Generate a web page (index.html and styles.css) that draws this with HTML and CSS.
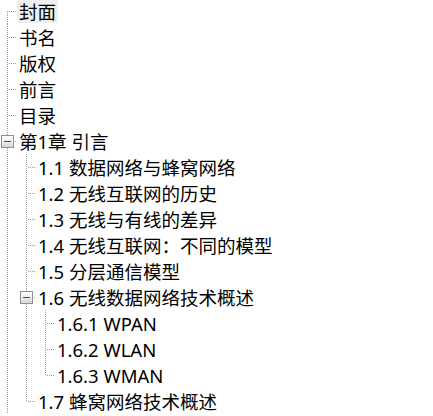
FILE: index.html
```html
<!DOCTYPE html>
<html lang="zh-CN">
<head>
<meta charset="utf-8">
<title>目录树</title>
<link rel="stylesheet" href="styles.css">
</head>
<body>
<ul class="tree root">
  <li class="first"><div class="row"><span class="slot"></span><span class="label selected">封面</span></div></li>
  <li><div class="row"><span class="slot"></span><span class="label">书名</span></div></li>
  <li><div class="row"><span class="slot"></span><span class="label">版权</span></div></li>
  <li><div class="row"><span class="slot"></span><span class="label">前言</span></div></li>
  <li><div class="row"><span class="slot"></span><span class="label">目录</span></div></li>
  <li>
    <div class="row"><span class="slot"><span class="toggle"></span></span><span class="label">第1章 引言</span></div>
    <ul class="tree">
      <li><div class="row"><span class="slot"></span><span class="label">1.1 数据网络与蜂窝网络</span></div></li>
      <li><div class="row"><span class="slot"></span><span class="label">1.2 无线互联网的历史</span></div></li>
      <li><div class="row"><span class="slot"></span><span class="label">1.3 无线与有线的差异</span></div></li>
      <li><div class="row"><span class="slot"></span><span class="label">1.4 无线互联网：不同的模型</span></div></li>
      <li><div class="row"><span class="slot"></span><span class="label">1.5 分层通信模型</span></div></li>
      <li>
        <div class="row"><span class="slot"><span class="toggle"></span></span><span class="label">1.6 无线数据网络技术概述</span></div>
        <ul class="tree">
          <li><div class="row"><span class="slot"></span><span class="label">1.6.1 WPAN</span></div></li>
          <li><div class="row"><span class="slot"></span><span class="label">1.6.2 WLAN</span></div></li>
          <li><div class="row"><span class="slot"></span><span class="label">1.6.3 WMAN</span></div></li>
        </ul>
      </li>
      <li><div class="row"><span class="slot"></span><span class="label">1.7 蜂窝网络技术概述</span></div></li>
    </ul>
  </li>
</ul>
</body>
</html>
```

FILE: styles.css
```css
html, body {
  margin: 0;
  padding: 0;
  background: #ffffff;
}

body {
  font-family: "Noto Sans", "Noto Sans CJK SC", sans-serif;
  font-size: 18.5px;
  color: #000000;
  overflow: hidden;
}

.tree {
  list-style: none;
  margin: 0;
  padding: 0;
}

.tree.root {
  margin-top: -2px;
}

.tree .tree {
  margin-left: 19px;
}

.tree li {
  background-image: repeating-linear-gradient(to bottom, #9a9a9a 0 1px, transparent 1px 2px);
  background-size: 1px 100%;
  background-position: 7px 0;
  background-repeat: no-repeat;
}

.tree li:last-child {
  background-size: 1px 14px;
}

.tree.root > li {
  background-size: 1px 100%;
}

.tree.root > li.first {
  background-position: 7px 13px;
}

.row {
  display: flex;
  align-items: center;
  height: 26px;
  background-image: repeating-linear-gradient(to right, #9a9a9a 0 1px, transparent 1px 2px);
  background-size: 8px 1px;
  background-position: 9px 13px;
  background-repeat: no-repeat;
}

.slot {
  flex: none;
  width: 17px;
  height: 26px;
  display: flex;
  align-items: center;
}

.toggle {
  position: relative;
  box-sizing: border-box;
  width: 13px;
  height: 13px;
  margin-left: 1px;
  margin-top: 1px;
  border: 1px solid #8e8f8f;
  background: linear-gradient(to bottom, #fdfdfd 0%, #f0f0f0 45%, #d6d6d6 100%);
}

.toggle::after {
  content: "";
  position: absolute;
  left: 2px;
  top: 5px;
  width: 7px;
  height: 1px;
  background: #2a4d9a;
}

.label {
  height: 23px;
  line-height: 23px;
  padding: 0 2px;
  white-space: nowrap;
  margin-top: 1px;
}

.label.selected {
  background: #efefef;
}
```
